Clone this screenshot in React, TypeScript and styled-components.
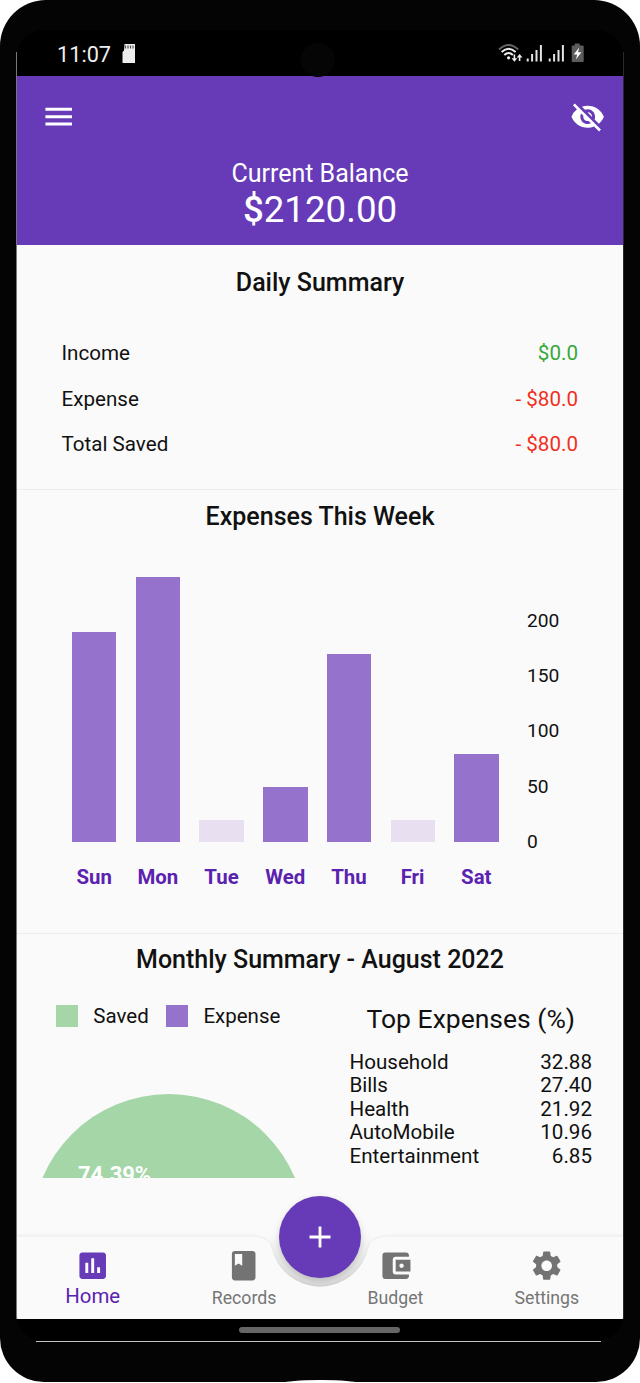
import React from "react";
import styled, { createGlobalStyle } from "styled-components";
import {
  MdMenu,
  MdVisibilityOff,
  MdAssessment,
  MdBook,
  MdAccountBalanceWallet,
  MdSettings,
} from "react-icons/md";

const GlobalStyle = createGlobalStyle`
  * { box-sizing: border-box; }
  body {
    margin: 0;
    background: #fff;
    font-family: Roboto, "Liberation Sans", sans-serif;
    color: #0c0c0c;
  }
`;

const Phone = styled.div`
  position: relative;
  width: 640px;
  height: 1382px;
  padding: 30px 17px 0;
  background: #040404;
  border-radius: 46px 46px 44px 44px;
`;

const Screen = styled.div`
  position: relative;
  width: 606px;
  height: 1311px;
  display: flex;
  flex-direction: column;
  background: #000;
  border-radius: 26px;
  overflow: hidden;
  color: #111;
`;

const Edge = styled.div<{ $side: "left" | "right" }>`
  position: absolute;
  top: 52px;
  ${(p) => p.$side}: 16px;
  width: 1px;
  height: 1267px;
  background: ${(p) => (p.$side === "left" ? "#777" : "#2a2a2a")};
`;

const BottomEdge = styled.div`
  position: absolute;
  left: 36px;
  top: 1341px;
  width: 565px;
  height: 1px;
  background: #c4c4c4;
`;

const Port = styled.div`
  position: absolute;
  left: 284px;
  top: 1380px;
  width: 73px;
  height: 3px;
  border-radius: 36px 36px 0 0 / 3px 3px 0 0;
  background: #fff;
`;

const Camera = styled.div`
  position: absolute;
  left: 301px;
  top: 43px;
  width: 34px;
  height: 34px;
  border-radius: 50%;
  background: #050505;
`;

const StatusBar = styled.div`
  height: 46px;
  flex: none;
  display: flex;
  align-items: center;
  justify-content: space-between;
  padding: 2px 38px 0 40px;
  color: #efefef;
`;

const Clock = styled.div`
  display: flex;
  align-items: center;
  gap: 10.5px;
  font-size: 21.7px;
`;

const Header = styled.header`
  height: 169px;
  flex: none;
  background: #673ab7;
  color: #fff;
`;

const Toolbar = styled.div`
  height: 82px;
  display: flex;
  justify-content: space-between;
  align-items: center;
  padding: 0 18px 0 24px;
`;

const Balance = styled.div`
  display: flex;
  flex-direction: column;
  align-items: center;
  font-size: 25px;
  line-height: 32px;
`;

const Amount = styled.strong`
  font-size: 36.7px;
  line-height: 39px;
  font-weight: 400;
`;

const Dollar = styled.span`
  font-weight: 500;
`;

const Content = styled.main`
  height: 1074px;
  flex: none;
  background: #fafafa;
`;

const Section = styled.section<{ $height: number }>`
  height: ${(p) => p.$height}px;
  border-bottom: 1.5px solid #ededed;
`;

const Title = styled.h2<{ $top: number }>`
  margin: 0;
  padding-top: ${(p) => p.$top}px;
  font-size: 25px;
  line-height: 30px;
  font-weight: 500;
  text-align: center;
`;

const SummaryRows = styled.div`
  padding: 32.5px 45px 0 44.5px;
`;

const SummaryRow = styled.div`
  height: 45.6px;
  display: flex;
  align-items: center;
  justify-content: space-between;
  font-size: 20.6px;
`;

const Money = styled.span<{ $positive?: boolean }>`
  color: ${(p) => (p.$positive ? "#37a83c" : "#f0301f")};
`;

const Chart = styled.div`
  display: flex;
  padding: 44px 0 0 55px;
`;

const Bars = styled.div`
  height: 266px;
  display: flex;
  align-items: flex-end;
  gap: 19.45px;
`;

const Bar = styled.div<{ $value: number; $empty?: boolean }>`
  width: 44.3px;
  height: ${(p) => p.$value * 1.106}px;
  background: ${(p) => (p.$empty ? "#e8e0f1" : "#9573cd")};
`;

const Axis = styled.div`
  height: 298px;
  display: flex;
  flex-direction: column;
  justify-content: flex-end;
  padding: 0 0 16px 28.2px;
  margin-bottom: -32px;
  font-size: 19.2px;
`;

const Tick = styled.span`
  height: 55.3px;
  display: flex;
  align-items: flex-end;
  line-height: 32px;
`;

const Days = styled.div`
  display: flex;
  gap: 19.4px;
  padding: 20px 0 0 55px;
`;

const Day = styled.span`
  width: 44.3px;
  display: flex;
  justify-content: center;
  font-size: 20.4px;
  line-height: 30px;
  font-weight: 700;
  color: #5b22b0;
`;

const Monthly = styled.div`
  display: flex;
  height: 204px;
  overflow: hidden;
`;

const PieColumn = styled.div`
  width: 332.5px;
  padding: 29.5px 0 0 39px;
`;

const Legend = styled.div`
  display: flex;
  align-items: center;
  height: 24px;
  font-size: 20.5px;
`;

const Swatch = styled.i<{ $color: string }>`
  width: 22.3px;
  height: 22.3px;
  margin-right: 15px;
  background: ${(p) => p.$color};
`;

const LegendLabel = styled.span`
  margin: -1px 17.4px 0 0;
`;

const Pie = styled.svg`
  display: block;
  margin: 66px 0 0 -20px;
`;

const TopColumn = styled.div`
  width: 242.5px;
  padding-top: 27.5px;
`;

const TopTitle = styled.h3`
  margin: 0 0 14.5px;
  font-size: 26.5px;
  line-height: 34px;
  font-weight: 400;
  text-align: center;
`;

const TopRow = styled.div`
  display: flex;
  justify-content: space-between;
  font-size: 20.6px;
  line-height: 23.55px;
`;

const Nav = styled.nav`
  position: absolute;
  left: 0;
  top: 1196px;
  width: 606px;
  height: 93px;
`;

const NavShape = styled.svg`
  position: absolute;
  left: 0;
  top: 0;
`;

const NavItems = styled.div`
  position: relative;
  display: flex;
  padding: 22.4px 0 0;
`;

const NavItem = styled.div<{ $active?: boolean }>`
  width: 151.4px;
  display: flex;
  flex-direction: column;
  align-items: center;
  color: ${(p) => (p.$active ? "#673ab7" : "#737373")};
  font-size: ${(p) => (p.$active ? 20.4 : 17.7)}px;
  line-height: 24px;
`;

const NavLabel = styled.span<{ $active?: boolean }>`
  padding-top: ${(p) => (p.$active ? 0.6 : 2.6)}px;
  color: ${(p) => (p.$active ? "#5b22b0" : "#757575")};
`;

const AddButton = styled.button`
  position: absolute;
  left: 262px;
  top: 1166px;
  width: 82px;
  height: 82px;
  padding: 0;
  border: 0;
  border-radius: 50%;
  background: #673ab7;
  box-shadow: 0 3px 7px rgba(0, 0, 0, 0.16);
  display: flex;
  align-items: center;
  justify-content: center;
`;

const Gesture = styled.div`
  width: 161px;
  height: 6px;
  margin: 8px 0 0 222px;
  border-radius: 3px;
  background: #666;
`;

const week = [
  { day: "Sun", value: 190 },
  { day: "Mon", value: 240 },
  { day: "Tue", value: 0 },
  { day: "Wed", value: 50 },
  { day: "Thu", value: 170 },
  { day: "Fri", value: 0 },
  { day: "Sat", value: 80 },
];

const topExpenses = [
  ["Household", "32.88"],
  ["Bills", "27.40"],
  ["Health", "21.92"],
  ["AutoMobile", "10.96"],
  ["Entertainment", "6.85"],
];

const SdCard = () => (
  <svg width="14" height="20" viewBox="0 0 14 20">
    <path d="M2.5 0H13v19H.5V8L2 6.5z" fill="#eee" />
    <path d="M3.5 1.5v3M6 1.5v3M8.5 1.5v3M11 1.5v3" stroke="#555" strokeWidth="1.2" />
  </svg>
);

const StatusIcons = () => (
  <svg width="88" height="22" viewBox="0 0 88 22" fill="none">
    <g transform="translate(.6 0)">
      <path d="M1.5 6.5Q11-2.5 20.5 6.5" stroke="#666" strokeWidth="2" />
      <path d="M4 9Q11 2.5 18 9M6.7 12Q11 8 15.3 12" stroke="#eee" strokeWidth="2" />
      <circle cx="11" cy="14.8" r="1.6" fill="#eee" />
      <path d="M16.8 11.500v5M22 13.500v4.500" stroke="#eee" strokeWidth="1.6" />
      <path d="M13.900 15.300h5.8l-2.9 3.400zM19.100 14.500h5.8l-2.9-3.400z" fill="#eee" />
    </g>
    <g transform="translate(1.7 0)">
      <g fill="#e4e4e4">
        <path d="M28 15.5h2v3h-2zM32.4 11h2v7.5h-2zM36.8 7h2v11.5h-2zM41.2 2h2v16.5h-2z" />
        <path d="M50 15.5h2v3h-2zM54.4 11h2v7.5h-2zM58.8 7h2v11.5h-2zM63.2 2h2v16.5h-2z" />
      </g>
      <path d="M76 .5h5v2h3q1 0 1 1V18q0 1-1 1H74q-1 0-1-1V3.500q0-1 1-1h2z" fill="#5c5c5c" />
      <path d="M80.500 4.500l-5.500 7h3.500l-1.300 5 5.500-7.200h-3.400z" fill="#fff" />
    </g>
  </svg>
);

export default function App() {
  return (
    <>
      <GlobalStyle />
      <Phone>
        <Screen>
          <StatusBar>
            <Clock>
              11:07
              <SdCard />
            </Clock>
            <StatusIcons />
          </StatusBar>
          <Header>
            <Toolbar>
              <MdMenu size={35.4} />
              <MdVisibilityOff size={35.4} />
            </Toolbar>
            <Balance>
              <span>Current Balance</span>
              <Amount>
                <Dollar>$</Dollar>2120.00
              </Amount>
            </Balance>
          </Header>
          <Content>
            <Section $height={245}>
              <Title $top={23}>Daily Summary</Title>
              <SummaryRows>
                <SummaryRow>
                  Income<Money $positive>$0.0</Money>
                </SummaryRow>
                <SummaryRow>
                  Expense<Money>- $80.0</Money>
                </SummaryRow>
                <SummaryRow>
                  Total Saved<Money>- $80.0</Money>
                </SummaryRow>
              </SummaryRows>
            </Section>
            <Section $height={443.5}>
              <Title $top={12}>Expenses This Week</Title>
              <Chart>
                <Bars>
                  {week.map((d) => (
                    <Bar key={d.day} $value={d.value || 20} $empty={!d.value} />
                  ))}
                </Bars>
                <Axis>
                  {[200, 150, 100, 50, 0].map((n) => (
                    <Tick key={n}>{n}</Tick>
                  ))}
                </Axis>
              </Chart>
              <Days>
                {week.map((d) => (
                  <Day key={d.day}>{d.day}</Day>
                ))}
              </Days>
            </Section>
            <Title $top={11}>Monthly Summary - August 2022</Title>
            <Monthly>
              <PieColumn>
                <Legend>
                  <Swatch $color="#a5d6a7" />
                  <LegendLabel>Saved</LegendLabel>
                  <Swatch $color="#9573cd" />
                  <LegendLabel>Expense</LegendLabel>
                </Legend>
                <Pie width="300" height="84" viewBox="0 0 300 84">
                  <circle cx="132.700" cy="137" r="137" fill="#a5d6a7" />
                  <text x="42" y="87.500" fill="#fff" fontSize="22" fontWeight="700">
                    74.39%
                  </text>
                </Pie>
              </PieColumn>
              <TopColumn>
                <TopTitle>Top Expenses (%)</TopTitle>
                {topExpenses.map(([name, pct]) => (
                  <TopRow key={name}>
                    <span>{name}</span>
                    <span>{pct}</span>
                  </TopRow>
                ))}
              </TopColumn>
            </Monthly>
          </Content>
          <Nav>
            <NavShape width="606" height="93" viewBox="0 0 606 93">
              <defs>
                <linearGradient id="notchShade" x1="0" y1="0" x2="0" y2="1">
                  <stop offset="0.450" stopColor="#000" stopOpacity="0" />
                  <stop offset="0.750" stopColor="#000" stopOpacity="0.07" />
                  <stop offset="1" stopColor="#000" stopOpacity="0.12" />
                </linearGradient>
              </defs>
              <circle cx="303" cy="11" r="50" fill="url(#notchShade)" />
              <path
                d="M0 10.500H232C246 10.500 252 14 254.700 22A49.500 49.500 0 0 0 351.300 22C354 14 360 10.500 374 10.500H606V93H0z"
                fill="#fafafa"
                style={{ filter: "drop-shadow(0 -0.500px 1.200px rgba(0,0,0,.07))" }}
              />
            </NavShape>
            <NavItems>
              <NavItem $active>
                <MdAssessment size={35.4} />
                <NavLabel $active>Home</NavLabel>
              </NavItem>
              <NavItem>
                <MdBook size={35.4} />
                <NavLabel>Records</NavLabel>
              </NavItem>
              <NavItem>
                <MdAccountBalanceWallet size={35.4} />
                <NavLabel>Budget</NavLabel>
              </NavItem>
              <NavItem>
                <MdSettings size={35.4} />
                <NavLabel>Settings</NavLabel>
              </NavItem>
            </NavItems>
          </Nav>
          <AddButton aria-label="Add">
            <svg width="22" height="22" viewBox="0 0 22 22">
              <path d="M11 0.500v21M0.500 11h21" stroke="#fff" strokeWidth="2.800" />
            </svg>
          </AddButton>
          <Gesture />
        </Screen>
        <Camera />
        <Edge $side="left" />
        <Edge $side="right" />
        <BottomEdge />
        <Port />
      </Phone>
    </>
  );
}
